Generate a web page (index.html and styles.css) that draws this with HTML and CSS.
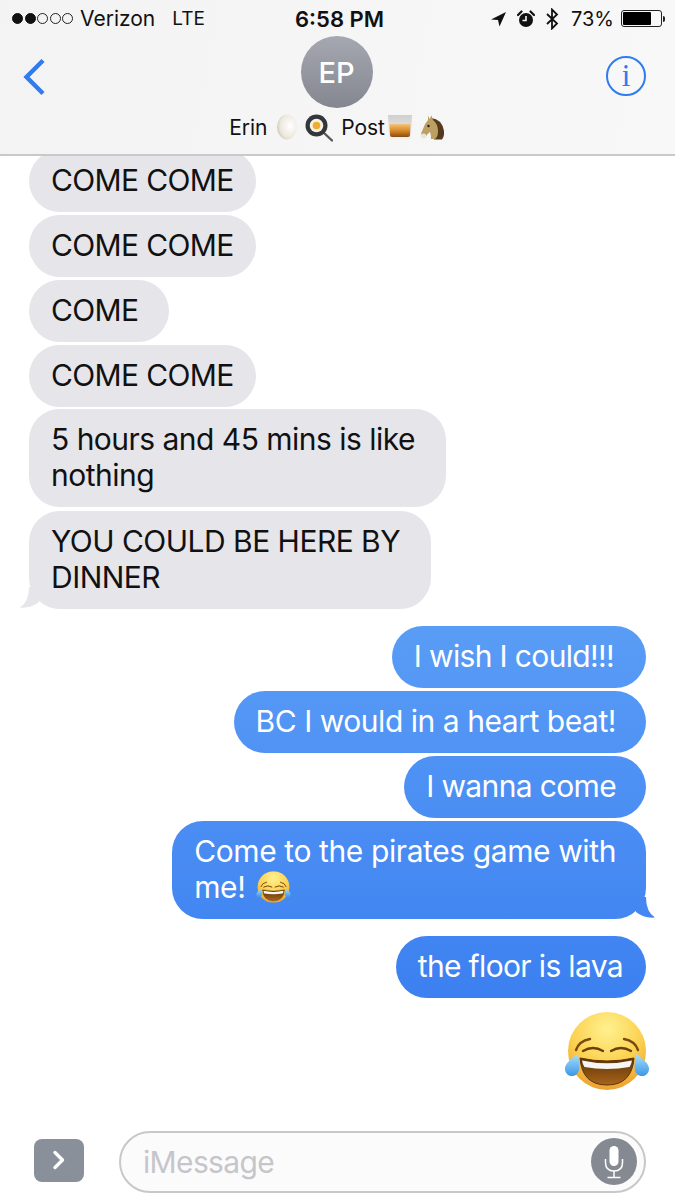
FILE: index.html
```html
<!DOCTYPE html>
<html lang="en">
<head>
<meta charset="utf-8">
<title>Messages</title>
<link rel="stylesheet" href="styles.css">
</head>
<body>
<svg class="defs" width="0" height="0" aria-hidden="true">
  <defs>
    <radialGradient id="faceFill" cx="50%" cy="22%" r="85%">
      <stop offset="0" stop-color="#fff18f"/>
      <stop offset=".55" stop-color="#fbd04e"/>
      <stop offset="1" stop-color="#e8962a"/>
    </radialGradient>
    <linearGradient id="tearFill" x1="0" y1="0" x2="0" y2="1">
      <stop offset="0" stop-color="#a9e0fb"/>
      <stop offset="1" stop-color="#3d97e6"/>
    </linearGradient>
    <linearGradient id="mouthFill" x1="0" y1="0" x2="0" y2="1">
      <stop offset="0" stop-color="#5d3208"/>
      <stop offset="1" stop-color="#a8651b"/>
    </linearGradient>
    <linearGradient id="whiskyFill" x1="0" y1="0" x2="0" y2="1">
      <stop offset="0" stop-color="#f3c57a"/>
      <stop offset=".5" stop-color="#d98a2a"/>
      <stop offset="1" stop-color="#8a4a14"/>
    </linearGradient>
    <linearGradient id="glassFill" x1="0" y1="0" x2="0" y2="1">
      <stop offset="0" stop-color="#cfcfcd"/>
      <stop offset="1" stop-color="#f2f2f0"/>
    </linearGradient>
    <radialGradient id="eggFill" cx="65%" cy="45%" r="75%">
      <stop offset="0" stop-color="#ffffff"/>
      <stop offset=".65" stop-color="#ece8dd"/>
      <stop offset="1" stop-color="#c4bba8"/>
    </radialGradient>
    <symbol id="laugh" viewBox="0 0 86 78">
      <circle cx="43" cy="39" r="39" fill="url(#faceFill)"/>
      <path d="M12 38Q15 29 26 27" fill="none" stroke="#7a4a10" stroke-width="2.400" stroke-linecap="round"/>
      <path d="M74 38Q71 29 60 27" fill="none" stroke="#7a4a10" stroke-width="2.400" stroke-linecap="round"/>
      <path d="M19 39Q29 33 39 39" fill="none" stroke="#6b3f0c" stroke-width="2.400" stroke-linecap="round"/>
      <path d="M67 39Q57 33 47 39" fill="none" stroke="#6b3f0c" stroke-width="2.400" stroke-linecap="round"/>
      <path d="M16 46Q43 52 70 46Q68 73 43 73Q18 73 16 46Z" fill="url(#mouthFill)" stroke="#5d3208" stroke-width="1"/>
      <path d="M18 48.500Q43 54 68 48.500Q67.500 52 65.500 55Q43 59 20.500 55Q18.500 52 18 48.500Z" fill="#f6f6f4"/>
      <path d="M14 42C15 50 17 58 13 62C9 66 2 64 1 58C0 52 8 46 14 42Z" fill="url(#tearFill)"/>
      <path d="M72 42C71 50 69 58 73 62C77 66 84 64 85 58C86 52 78 46 72 42Z" fill="url(#tearFill)"/>
    </symbol>
  </defs>
</svg>

<div class="phone">
  <header class="top">
    <div class="status">
      <div class="status-left">
        <span class="signal"><i class="on"></i><i class="on"></i><i></i><i></i><i></i></span>
        <span>Verizon</span>
        <span class="lte">LTE</span>
      </div>
      <div class="clock">6:58 PM</div>
      <div class="status-right">
        <svg class="ico-loc" viewBox="0 0 16 16"><path d="M16 1L1 8.500L8 9L9.500 15.500Z" fill="#111"/></svg>
        <svg class="ico-alarm" viewBox="0 0 18 18"><circle cx="9" cy="10" r="7" fill="#111"/><path d="M1 5L4.500 1.500M17 5L13.500 1.500" stroke="#111" stroke-width="2.200" stroke-linecap="round"/><path d="M9 6V10.500H5.500" fill="none" stroke="#f7f7f7" stroke-width="1.600"/></svg>
        <svg class="ico-bt" viewBox="0 0 14 22"><path d="M2 6L12 15.500L7 20.500V1.500L12 6.500L2 16" fill="none" stroke="#111" stroke-width="1.800"/></svg>
        <span class="pct">73%</span>
        <span class="battery"><span class="level"></span></span>
        <span class="nub"></span>
      </div>
    </div>
    <div class="nav">
      <svg class="back" viewBox="0 0 24 38"><path d="M21 2.500L4.500 19L21 35.500" fill="none" stroke="#2f7bf0" stroke-width="4.400"/></svg>
      <div class="avatar">EP</div>
      <div class="info">i</div>
    </div>
    <div class="name">
      <span class="n-erin">Erin</span>
      <svg class="e-egg" viewBox="0 0 22 26"><ellipse cx="11" cy="13" rx="10" ry="12.500" fill="url(#eggFill)"/></svg>
      <svg class="e-pan" viewBox="0 0 28 28"><path d="M18 18L27 26.500" stroke="#55575a" stroke-width="2.400" stroke-linecap="round"/><circle cx="11.500" cy="11.500" r="11" fill="#33363a"/><circle cx="11.500" cy="11.500" r="6.800" fill="#f6f1e2"/><circle cx="11.500" cy="11.500" r="3.800" fill="#eeae32"/></svg>
      <span class="n-post">Post</span>
      <svg class="e-glass" viewBox="0 0 26 26"><path d="M1 1H25L24 23Q24 25.500 21 25.500H5Q2 25.500 2 23Z" fill="url(#glassFill)"/><path d="M2.500 10H23.500L23 21Q23 23 21 23H5Q3 23 3 21Z" fill="url(#whiskyFill)"/></svg>
      <svg class="e-horse" viewBox="0 0 24 25"><path d="M11 3Q22 4 24 16Q24.500 22 22 24.500H14Z" fill="#54391c"/><path d="M8 .5L9.500 4L11.500 .5L13 5Q18 9 18 16Q18 22 15 24L11 24Q11 19 10 17Q7 19 5.500 22Q2.500 24 1 21.500Q.5 18 3 14Q5 8 8 5Z" fill="#bb9f63"/><ellipse cx="3.500" cy="21" rx="2.800" ry="2.500" fill="#ece6da"/><circle cx="8.500" cy="11" r="1.200" fill="#2b1c0c"/></svg>
    </div>
  </header>

  <main class="thread">
    <div class="bubble in tight first">COME COME</div>
    <div class="bubble in tight">COME COME</div>
    <div class="bubble in">COME</div>
    <div class="bubble in tight">COME COME</div>
    <div class="bubble in long hours">5 hours and 45 mins is like<br>nothing</div>
    <div class="bubble in long dinner">YOU COULD BE HERE BY<br>DINNER
      <svg class="tail tail-l" viewBox="0 0 22 22"><path d="M10 0Q10 15 1 20.500Q12 21.500 20 15L22 0Z" fill="#e5e5ea"/></svg>
    </div>
    <div class="bubble out group wish">I wish I could!!!</div>
    <div class="bubble out longer">BC I would in a heart beat!</div>
    <div class="bubble out">I wanna come</div>
    <div class="bubble out longest">Come to the pirates game with<br>me! <svg class="e-inline" viewBox="0 0 86 78"><use href="#laugh"/></svg>
      <svg class="tail tail-r" viewBox="0 0 22 22"><path d="M12 0Q12 15 21 20.500Q10 21.500 2 15L0 0Z" fill="#4487f2"/></svg>
    </div>
    <div class="bubble out group short">the floor is lava</div>
    <svg class="e-big" viewBox="0 0 86 78"><use href="#laugh"/></svg>
  </main>

  <footer class="composer">
    <div class="expand">
      <svg viewBox="0 0 14 20"><path d="M3 2.500L10.500 10L3 17.500" fill="none" stroke="#fff" stroke-width="3.400" stroke-linecap="round" stroke-linejoin="round"/></svg>
    </div>
    <div class="field">
      <span class="placeholder">iMessage</span>
      <div class="mic">
        <svg viewBox="0 0 20 34"><rect x="5.500" y="1" width="9" height="20" rx="4.500" fill="#fff"/><path d="M1.500 14V17.500Q1.500 26 10 26Q18.500 26 18.500 17.500V14M10 26V32.500M3.500 32.500H16.500" fill="none" stroke="#fff" stroke-width="1.500"/></svg>
      </div>
    </div>
  </footer>
</div>
</body>
</html>
```

FILE: styles.css
```css
* { box-sizing: border-box; }

html, body {
  margin: 0;
  padding: 0;
  background: #fff;
}

.defs { position: absolute; }

.phone {
  width: 675px;
  height: 1200px;
  display: flex;
  flex-direction: column;
  overflow: hidden;
  font-family: Inter, "Liberation Sans", sans-serif;
  color: #111;
}

/* Header */
.top {
  height: 156px;
  flex: none;
  background: linear-gradient(100deg, #f3f3f3 0%, #f5f5f5 40%, #f8f8f8 100%);
  border-bottom: 2px solid #c9c9c9;
}

.status {
  height: 37px;
  display: grid;
  grid-template-columns: 1fr auto 1fr;
  align-items: center;
  font-size: 21px;
}

.status-left {
  display: flex;
  align-items: center;
  padding-left: 12px;
}

.signal {
  display: flex;
  gap: 1.500px;
  margin-right: 7px;
}

.signal i {
  width: 11px;
  height: 11px;
  border-radius: 50%;
  border: 1px solid #222;
}

.signal i.on { background: #111; border-color: #111; }

.lte { margin-left: 17px; font-size: 19px; }

.clock {
  font-weight: 600;
  font-size: 22px;
  margin-left: 4px;
}

.status-right {
  display: flex;
  align-items: center;
  justify-content: flex-end;
  padding-right: 10px;
}

.ico-loc { width: 16px; height: 16px; margin-right: 11px; }
.ico-alarm { width: 18px; height: 18px; margin-right: 10px; }
.ico-bt { width: 14px; height: 22px; margin-right: 12px; }
.pct { margin-right: 7px; font-size: 20px; }

.battery {
  width: 41px;
  height: 17px;
  border: 1px solid #222;
  border-radius: 3px;
  padding: 1px;
  display: block;
}

.level {
  display: block;
  width: 28px;
  height: 13px;
  background: #000;
  border-radius: 1px;
}

.nub {
  width: 2px;
  height: 6px;
  margin-left: 1px;
  background: #222;
  border-radius: 0 2px 2px 0;
}

.nav {
  height: 71px;
  display: grid;
  grid-template-columns: 1fr auto 1fr;
  align-items: center;
}

.back {
  width: 24px;
  height: 38px;
  margin-left: 22px;
  margin-top: 8px;
}

.avatar {
  width: 72px;
  height: 72px;
  margin: -1px 1px 0 -1px;
  border-radius: 50%;
  background: linear-gradient(#a5a8b1, #84878f);
  color: #fff;
  font-size: 29px;
  font-weight: 500;
  display: flex;
  align-items: center;
  justify-content: center;
}

.info {
  justify-self: end;
  width: 40px;
  height: 40px;
  margin-right: 29px;
  margin-top: 7px;
  border: 2px solid #2f7bf0;
  border-radius: 50%;
  color: #2f7bf0;
  font-family: "Liberation Serif", serif;
  font-size: 31px;
  line-height: 35px;
  text-align: center;
}

.name {
  display: flex;
  align-items: center;
  justify-content: center;
  height: 38px;
  font-size: 21px;
  padding-right: 2px;
  letter-spacing: -0.100px;
}

.e-egg { width: 22px; height: 26px; margin-left: 9px; }
.e-pan { width: 28px; height: 28px; margin-left: 7px; margin-top: 2px; }
.n-post { margin-left: 8px; }
.e-glass { width: 26px; height: 26px; margin-left: 2px; }
.e-horse { width: 24px; height: 25px; margin-left: 7px; }

/* Messages */
.thread {
  flex: 1;
  min-height: 0;
  display: flex;
  flex-direction: column;
  gap: 3px;
  overflow: hidden;
}

.bubble {
  position: relative;
  width: fit-content;
  font-size: 30px;
  font-weight: 380;
  line-height: 36px;
  padding: 12px 31px 14px 22px;
  border-radius: 31px;
  letter-spacing: -0.650px;
}

.bubble.first { margin-top: -6px; }

.in {
  margin-left: 29px;
  background: #e5e5ea;
  color: #111;
  padding-top: 11.500px;
  padding-bottom: 14.500px;
}

.in.tight { padding-right: 22px; }
.in.long { letter-spacing: -0.520px; }
.in.hours { margin-top: -1px; }
.in.dinner { margin-top: 1px; }

.out {
  align-self: flex-end;
  margin-right: 29px;
  padding-right: 30px;
  color: #fff;
  background: linear-gradient(#5a9df6, #3c80f1) fixed;
  background-size: 100% 380px;
  background-position: 0 620px;
  background-repeat: no-repeat;
}

.out.group { margin-top: 14px; }
.out.short { padding-right: 23px; }
.out.wish { padding-right: 32px; }
.out.longer { letter-spacing: -0.460px; }
.out.longest { letter-spacing: -0.400px; }

.tail {
  position: absolute;
  width: 22px;
  height: 22px;
  bottom: 0;
}

.tail-l { left: -10px; }
.tail-r { right: -10px; }

.e-inline {
  width: 35px;
  height: 32px;
  vertical-align: -5px;
  margin-left: 3px;
}

.e-big {
  flex: none;
  align-self: flex-end;
  width: 86px;
  height: 78px;
  margin-top: 11px;
  margin-right: 25px;
}

/* Composer */
.composer {
  height: 80px;
  flex: none;
  display: flex;
  align-items: center;
  gap: 35px;
  padding: 3px 29px 0 34px;
}

.expand {
  width: 50px;
  height: 43px;
  margin-top: -3px;
  background: #8a9099;
  border-radius: 8px;
  display: flex;
  align-items: center;
  justify-content: center;
}

.expand svg { width: 14px; height: 20px; }

.field {
  flex: 1;
  height: 62px;
  border: 2px solid #c8c8cb;
  border-radius: 31px;
  background: #fbfbfc;
  display: flex;
  align-items: center;
  justify-content: space-between;
  padding: 0 7px 0 22px;
}

.placeholder {
  font-size: 30px;
  font-weight: 380;
  color: #c6c6ca;
  letter-spacing: -0.650px;
}

.mic {
  width: 46px;
  height: 47px;
  border-radius: 50%;
  background: #858a92;
  display: flex;
  align-items: center;
  justify-content: center;
}

.mic svg { width: 20px; height: 34px; }
```
